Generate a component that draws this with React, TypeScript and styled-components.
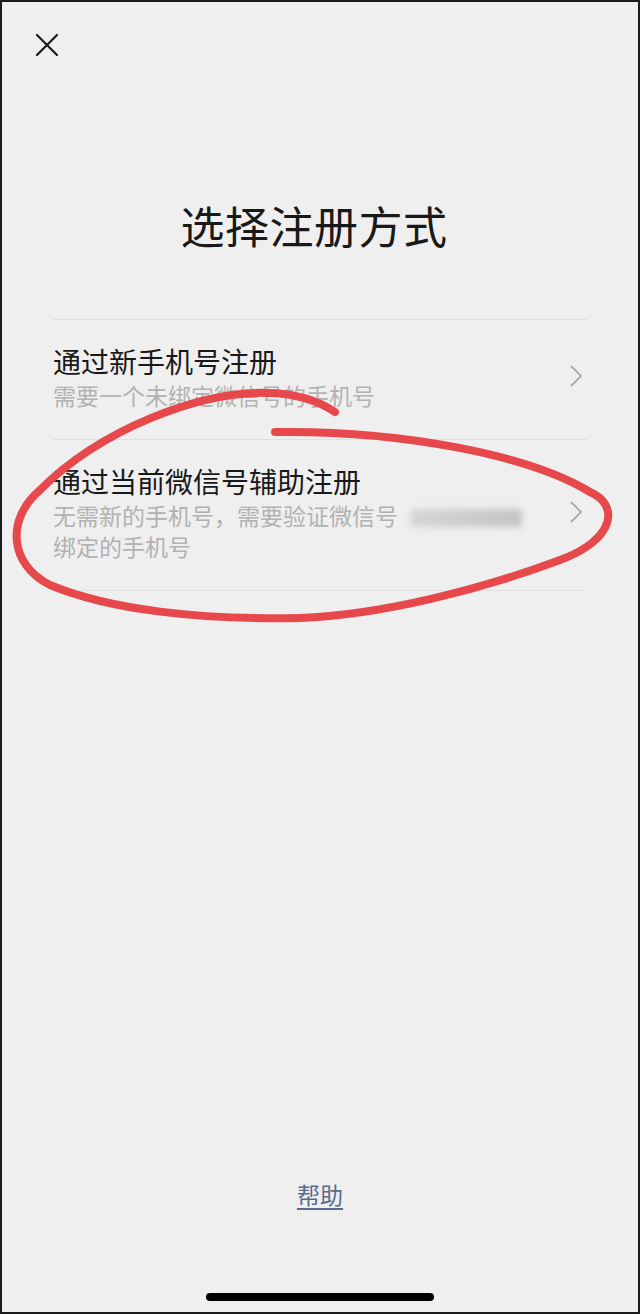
import React from "react";
import styled, { createGlobalStyle } from "styled-components";

const GlobalStyle = createGlobalStyle`
  html, body {
    margin: 0;
    padding: 0;
    background: #efefef;
  }
  * {
    box-sizing: border-box;
  }
`;

const Frame = styled.div`
  position: relative;
  width: 640px;
  height: 1314px;
  border: 2px solid #1c1c1c;
  background: #efefef;
  display: flex;
  flex-direction: column;
  font-family: "Noto Sans CJK SC", "Noto Sans", sans-serif;
  overflow: hidden;
`;

const TopBar = styled.div`
  display: flex;
  padding: 30px 0 0 32px;
`;

const CloseButton = styled.button`
  width: 26px;
  height: 26px;
  padding: 0;
  border: none;
  background: transparent;
  display: flex;
  align-items: center;
  justify-content: center;
  cursor: pointer;
`;

const Title = styled.h1`
  margin: 139px 0 0;
  padding-right: 12px;
  text-align: center;
  font-size: 44px;
  line-height: 56px;
  font-weight: 400;
  color: #191919;
  letter-spacing: 0.5px;
`;

const List = styled.div`
  margin: 66px 51px 0;
  border-top: 1px solid #e0e0e0;
`;

const Row = styled.div`
  display: flex;
  align-items: center;
  padding: 21px 4px 28px 0;
  border-bottom: 1px solid #e0e0e0;
  cursor: pointer;
`;

const RowText = styled.div`
  flex: 1;
  min-width: 0;
`;

const RowTitle = styled.div`
  font-size: 28px;
  line-height: 40px;
  color: #191919;
`;

const RowSub = styled.div`
  margin-top: -1px;
  font-size: 23px;
  line-height: 31px;
  color: #b2b2b2;
`;

const Hidden = styled.span`
  display: inline-block;
  width: 112px;
  height: 18px;
  margin-left: 12px;
  vertical-align: -2px;
  border-radius: 3px;
  background: linear-gradient(90deg, #d6d6d6 0%, #cbcbcb 60%, #c4c4c4 100%);
  filter: blur(3px);
`;

const Chevron = styled.svg`
  flex: none;
  width: 13px;
  height: 22px;
`;

const Footer = styled.div`
  margin-top: auto;
  display: flex;
  flex-direction: column;
  align-items: center;
`;

const HelpLink = styled.a`
  font-size: 23px;
  line-height: 30px;
  color: #596a8f;
  text-decoration: underline;
  text-underline-offset: 4px;
  text-decoration-thickness: 1.5px;
  cursor: pointer;
`;

const HomeIndicator = styled.div`
  width: 228px;
  height: 8px;
  margin: 84px 0 11px;
  border-radius: 4px;
  background: #000;
`;

const Annotation = styled.svg`
  position: absolute;
  top: -2px;
  left: -2px;
  width: 640px;
  height: 1314px;
  pointer-events: none;
`;

const ChevronIcon = () => (
  <Chevron viewBox="0 0 13 22" fill="none">
    <polyline
      points="1.5,1.5 11,11 1.5,20.5"
      stroke="#a9a9a9"
      strokeWidth="1.8"
      strokeLinecap="round"
      strokeLinejoin="round"
    />
  </Chevron>
);

const options = [
  {
    title: "通过新手机号注册",
    lines: [<>需要一个未绑定微信号的手机号</>],
  },
  {
    title: "通过当前微信号辅助注册",
    lines: [
      <>
        无需新的手机号，需要验证微信号
        <Hidden />
      </>,
      <>绑定的手机号</>,
    ],
  },
];

export default function App() {
  return (
    <>
      <GlobalStyle />
      <Frame>
        <TopBar>
          <CloseButton aria-label="关闭">
            <svg width="24" height="24" viewBox="0 0 24 24" fill="none">
              <path
                d="M2 2 L22 22 M22 2 L2 22"
                stroke="#1a1a1a"
                strokeWidth="2.2"
                strokeLinecap="round"
              />
            </svg>
          </CloseButton>
        </TopBar>

        <Title>选择注册方式</Title>

        <List>
          {options.map((opt) => (
            <Row key={opt.title}>
              <RowText>
                <RowTitle>{opt.title}</RowTitle>
                <RowSub>
                  {opt.lines.map((line, i) => (
                    <div key={i}>{line}</div>
                  ))}
                </RowSub>
              </RowText>
              <ChevronIcon />
            </Row>
          ))}
        </List>

        <Footer>
          <HelpLink>帮助</HelpLink>
          <HomeIndicator />
        </Footer>

        <Annotation viewBox="0 0 640 1314" fill="none">
          <path
            d="M 275 432
               C 400 430, 530 455, 590 492
               C 620 505, 615 540, 560 560
               C 480 590, 380 615, 300 618
               C 200 620, 110 610, 50 585
               C 10 565, 5 520, 40 490
               C 100 430, 200 390, 270 393
               C 300 394, 320 402, 335 412"
            stroke="#e6484c"
            strokeWidth="8"
            strokeLinecap="round"
            strokeLinejoin="round"
          />
        </Annotation>
      </Frame>
    </>
  );
}
